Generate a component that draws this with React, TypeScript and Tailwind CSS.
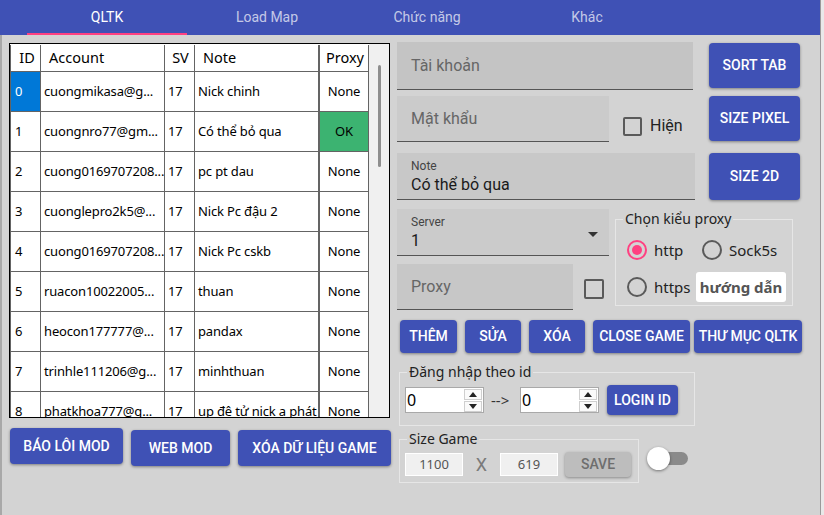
import React from "react";

const rows: [string, string, string, string, string][] = [
  ["0", "cuongmikasa@g...", "17", "Nick chinh", "None"],
  ["1", "cuongnro77@gm...", "17", "Có thể bỏ qua", "OK"],
  ["2", "cuong0169707208...", "17", "pc pt dau", "None"],
  ["3", "cuonglepro2k5@...", "17", "Nick Pc đậu 2", "None"],
  ["4", "cuong0169707208...", "17", "Nick Pc cskb", "None"],
  ["5", "ruacon10022005...", "17", "thuan", "None"],
  ["6", "heocon177777@...", "17", "pandax", "None"],
  ["7", "trinhle111206@g...", "17", "minhthuan", "None"],
  ["8", "phatkhoa777@g...", "17", "up đệ tử nick a phát", "None"],
];

function Btn({ className, children }: { className: string; children: React.ReactNode }) {
  return (
    <div
      className={
        "flex items-center justify-center rounded-[4px] bg-[#3f51b5] text-white text-[14px] font-medium whitespace-nowrap shadow-[0_1px_3px_rgba(0,0,0,0.4)] font-['Roboto',sans-serif] " +
        className
      }
    >
      {children}
    </div>
  );
}

function CheckBox({ className }: { className: string }) {
  return <div className={"border-2 border-[#5a5a5a] rounded-[2px] shrink-0 " + className} />;
}

function Radio({ checked }: { checked?: boolean }) {
  return checked ? (
    <div className="w-[20px] h-[20px] rounded-full border-2 border-[#ff4081] flex items-center justify-center shrink-0">
      <div className="w-[10px] h-[10px] rounded-full bg-[#ff4081]" />
    </div>
  ) : (
    <div className="w-[20px] h-[20px] rounded-full border-2 border-[#5a5a5a] shrink-0" />
  );
}

function Spinner({ value }: { value: string }) {
  return (
    <div className="w-[79px] h-[26px] bg-white border border-[#a9a9a9] flex">
      <div className="flex-1 pl-[1px] text-[16px] leading-[24px] text-black font-['Noto_Sans',sans-serif]">{value}</div>
      <div className="w-[19px] flex flex-col justify-center gap-[1px] pr-[1px]">
        <div className="h-[11px] border border-[#cfcfcf] bg-[#fafafa] flex items-center justify-center">
          <svg width="8" height="5" viewBox="0 0 8 5">
            <path d="M0 5 L4 0 L8 5 Z" fill="#222" />
          </svg>
        </div>
        <div className="h-[11px] border border-[#cfcfcf] bg-[#fafafa] flex items-center justify-center">
          <svg width="8" height="5" viewBox="0 0 8 5">
            <path d="M0 0 L4 5 L8 0 Z" fill="#222" />
          </svg>
        </div>
      </div>
    </div>
  );
}

const cellBase = "border-r border-b border-[#646464] flex items-center overflow-hidden whitespace-nowrap";

export default function App() {
  return (
    <div className="w-[824px] h-[515px] overflow-hidden flex bg-[#d3d3d3]">
      <div className="w-[820px] flex flex-col">
        {/* Tabs */}
        <div className="h-[35px] shrink-0 bg-[#3f51b5] flex pl-[27px] font-['Roboto',sans-serif] text-[14px]">
          <div className="w-[160px] flex items-center justify-center border-b-2 border-[#ff4081] text-white pt-[2px]">QLTK</div>
          <div className="w-[160px] flex items-center justify-center border-b-2 border-transparent text-white/70 pt-[2px]">Load Map</div>
          <div className="w-[160px] flex items-center justify-center border-b-2 border-transparent text-white/70 pt-[2px]">Chức năng</div>
          <div className="w-[160px] flex items-center justify-center border-b-2 border-transparent text-white/70 pt-[2px]">Khác</div>
        </div>

        <div className="flex-1 flex border-l-2 border-[#a8a8a8]">
          {/* Left column */}
          <div className="w-[389px] pl-[7px] pt-[8px] flex flex-col">
            <div className="w-[381px] h-[375px] border border-black flex overflow-hidden bg-white font-['Noto_Sans',sans-serif] text-black">
              <div className="w-[359px] flex flex-col shrink-0">
                <div className="h-[28px] flex text-[14.5px] shrink-0 pt-[1px]">
                  <div className={cellBase + " border-l w-[31px] justify-center pl-[3px]"}>ID</div>
                  <div className={cellBase + " w-[124px] pl-[8px]"}>Account</div>
                  <div className={cellBase + " w-[30px] justify-center pl-[2px]"}>SV</div>
                  <div className={cellBase + " w-[124px] pl-[8px]"}>Note</div>
                  <div className={cellBase + " border-l w-[50px] justify-center pl-[2px]"}>Proxy</div>
                </div>
                {rows.map((r, i) => (
                  <div key={i} className="h-[40px] flex text-[13px] tracking-[-0.15px] shrink-0">
                    <div className={cellBase + " border-l w-[31px] pl-[4px] " + (i === 0 ? "bg-[#0078d7] text-white" : "")}>{r[0]}</div>
                    <div className={cellBase + " w-[124px] pl-[3px]"}>{r[1]}</div>
                    <div className={cellBase + " w-[30px] pl-[3px]"}>{r[2]}</div>
                    <div className={cellBase + " w-[124px] pl-[3px]"}>{r[3]}</div>
                    <div className={cellBase + " border-l w-[50px] justify-center " + (r[4] === "OK" ? "bg-[#3cb371]" : "")}>{r[4]}</div>
                  </div>
                ))}
              </div>
              <div className="flex-1 bg-[#f0f0f0] pt-[21px] pl-[9px]">
                <div className="w-[3px] h-[102px] rounded-full bg-[#8e8e8e]" />
              </div>
            </div>
            <div className="flex items-start gap-[8px] pl-[1px]">
              <Btn className="mt-[10px] w-[113px] h-[36px]">BÁO LÔI MOD</Btn>
              <Btn className="mt-[12px] w-[99px] h-[36px]">WEB MOD</Btn>
              <Btn className="mt-[12px] w-[153px] h-[36px]">XÓA DỮ LIỆU GAME</Btn>
            </div>
          </div>

          {/* Right column */}
          <div className="pl-[6px] pt-[7px] flex flex-col font-['Roboto',sans-serif]">
            {/* Row 1 */}
            <div className="flex items-start">
              <div className="w-[296px] h-[48px] bg-[#c4c4c4] border-b border-[#555] flex items-center pl-[14px] pt-[1px] text-[16px] text-[#666]">Tài khoản</div>
              <Btn className="ml-[16px] mt-[1px] w-[91px] h-[45px]">SORT TAB</Btn>
            </div>
            {/* Row 2 */}
            <div className="flex items-start mt-[6px]">
              <div className="w-[212px] h-[46px] bg-[#cbcbcb] border-b border-[#555] flex items-center pl-[14px] text-[16px] text-[#666]">Mật khẩu</div>
              <div className="w-[100px] pl-[14px] mt-[18px] flex items-center gap-[8px]">
                <CheckBox className="w-[19px] h-[19px]" />
                <span className="text-[16px] text-[#222]">Hiện</span>
              </div>
              <Btn className="w-[91px] h-[45px]">SIZE PIXEL</Btn>
            </div>
            {/* Row 3 */}
            <div className="flex items-start mt-[11px]">
              <div className="w-[298px] h-[47px] bg-[#c8c8c8] border-b border-[#555] flex flex-col pl-[14px] pt-[6px]">
                <span className="text-[12px] leading-[14px] text-[#444]">Note</span>
                <span className="text-[16px] leading-[20px] mt-[2px] text-[#1a1a1a]">Có thể bỏ qua</span>
              </div>
              <Btn className="ml-[14px] w-[91px] h-[47px]">SIZE 2D</Btn>
            </div>
            {/* Row 4 */}
            <div className="flex items-start mt-[9px]">
              <div className="w-[212px] flex flex-col">
                <div className="h-[47px] bg-[#cbcbcb] border-b border-[#555] flex pl-[14px] pr-[11px]">
                  <div className="flex-1 flex flex-col pt-[6px]">
                    <span className="text-[12px] leading-[14px] text-[#444]">Server</span>
                    <span className="text-[16px] leading-[20px] mt-[2px] text-[#1a1a1a]">1</span>
                  </div>
                  <svg className="mt-[23px]" width="10" height="5" viewBox="0 0 10 5">
                    <path d="M0 0 L10 0 L5 5 Z" fill="#333" />
                  </svg>
                </div>
                <div className="flex items-start mt-[8px]">
                  <div className="w-[176px] h-[46px] bg-[#c7c7c7] border-b border-[#555] flex items-center pl-[14px] text-[16px] text-[#666]">Proxy</div>
                  <CheckBox className="ml-[11px] mt-[15px] w-[20px] h-[20px]" />
                </div>
              </div>
              <fieldset className="ml-[6px] w-[178px] h-[97px] border border-[#e6e6e6] px-0 font-['Noto_Sans',sans-serif]">
                <legend className="ml-[7px] px-[2px] text-[14px] leading-[20px] text-[#222]">Chọn kiểu proxy</legend>
                <div className="flex items-center h-[30px] mt-[6px] pl-[11px] text-[15px] text-[#222]">
                  <div className="w-[75px] flex items-center gap-[7px]">
                    <Radio checked />
                    <span>http</span>
                  </div>
                  <div className="flex items-center gap-[7px]">
                    <Radio />
                    <span>Sock5s</span>
                  </div>
                </div>
                <div className="flex items-center h-[30px] mt-[7px] pl-[11px] text-[15px] text-[#222]">
                  <div className="w-[69px] flex items-center gap-[7px]">
                    <Radio />
                    <span>https</span>
                  </div>
                  <div className="w-[90px] h-[30px] bg-white rounded-[3px] flex items-center justify-center font-bold text-[#555] text-[15px]">hướng dẫn</div>
                </div>
              </fieldset>
            </div>
            {/* Row 5 */}
            <div className="flex items-start mt-[10px] pl-[3px]">
              <Btn className="w-[57px] h-[33px]">THÊM</Btn>
              <Btn className="ml-[8px] w-[56px] h-[33px]">SỬA</Btn>
              <Btn className="ml-[8px] w-[56px] h-[33px]">XÓA</Btn>
              <Btn className="ml-[8px] w-[97px] h-[33px]">CLOSE GAME</Btn>
              <Btn className="ml-[4px] w-[108px] h-[33px]">THƯ MỤC QLTK</Btn>
            </div>
            {/* Row 6 */}
            <fieldset className="mt-[9px] ml-[2px] w-[296px] h-[64px] border border-[#e6e6e6] px-0 font-['Noto_Sans',sans-serif]">
              <legend className="ml-[7px] px-[2px] text-[14px] leading-[20px] text-[#222]">Đăng nhập theo id</legend>
              <div className="flex items-center h-[30px] mt-[3px] pl-[5px]">
                <Spinner value="0" />
                <div className="w-[36px] pl-[7px] text-[15px] text-[#333]">--&gt;</div>
                <Spinner value="0" />
                <Btn className="ml-[8px] w-[71px] h-[30px]">LOGIN ID</Btn>
              </div>
            </fieldset>
            {/* Row 7 */}
            <div className="flex items-start">
              <fieldset className="mt-[3px] ml-[2px] w-[240px] h-[54px] border border-[#e6e6e6] px-0 font-['Noto_Sans',sans-serif]">
                <legend className="ml-[7px] px-[2px] text-[14px] leading-[20px] text-[#222]">Size Game</legend>
                <div className="flex items-center h-[25px] mt-[3px] pl-[5px]">
                  <div className="w-[58px] h-[23px] bg-[#f0f0f0] border border-white flex items-center justify-center text-[13px] text-[#555]">1100</div>
                  <div className="w-[37px] text-center text-[18px] text-[#7a7a7a] font-['Roboto',sans-serif]">X</div>
                  <div className="w-[58px] h-[23px] bg-[#f0f0f0] border border-white flex items-center justify-center text-[13px] text-[#555]">619</div>
                  <div className="ml-[7px] w-[66px] h-[25px] rounded-[4px] bg-[#bdbdbd] shadow-[0_1px_3px_rgba(0,0,0,0.35)] flex items-center justify-center text-[14px] font-medium text-[#6e6e6e] font-['Roboto',sans-serif]">SAVE</div>
                </div>
              </fieldset>
              <div className="ml-[8px] mt-[21px] w-[42px] h-[23px] relative">
                <div className="absolute left-[9px] top-[5px] w-[32px] h-[13px] rounded-full bg-[#8a8a8a]" />
                <div className="absolute left-0 top-0 w-[23px] h-[23px] rounded-full bg-white shadow-[0_1px_3px_rgba(0,0,0,0.45)]" />
              </div>
            </div>
          </div>
        </div>
      </div>
      <div className="w-[1px] bg-[#9a9a9a]" />
      <div className="flex-1 bg-[#e9e9e9]" />
    </div>
  );
}
